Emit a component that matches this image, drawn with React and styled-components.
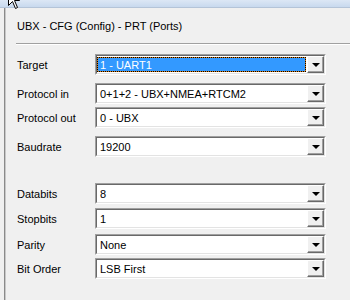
import React from 'react';
import styled, { createGlobalStyle } from 'styled-components';

const GlobalStyle = createGlobalStyle`
	html, body {
		margin: 0;
		padding: 0;
		background: #f0f0f0;
	}
	body {
		font-family: "Liberation Sans", Arial, sans-serif;
		font-size: 11px;
		color: #000;
		overflow: hidden;
	}
`;

const Screen = styled.div`
	position: relative;
	width: 350px;
	height: 300px;
	display: flex;
	flex-direction: column;
	background: #f0f0f0;
`;

const TopStrip = styled.div`
	height: 7px;
	flex-shrink: 0;
	background: linear-gradient(#dce7f5, #c8d9ee);
	border-bottom: 1px solid #b4c4d8;
`;

const Panel = styled.div`
	flex: 1;
	margin-left: 4px;
	border-left: 1px solid #8a8a8a;
	box-shadow: inset 1px 0 0 #c8c8c8;
	padding-left: 11px;
	display: flex;
	flex-direction: column;
`;

const Title = styled.div`
	margin-top: 12px;
	line-height: 13px;
	height: 13px;
	padding-left: 1px;
`;

const Separator = styled.div`
	margin-top: 10px;
	height: 1px;
	background: #a0a0a0;
	border-bottom: 1px solid #ffffff;
`;

const Row = styled.div`
	display: flex;
	align-items: center;
	height: 21px;
	margin-top: ${props => props.gap}px;
`;

const Label = styled.div`
	width: 78px;
	flex-shrink: 0;
	padding-left: 1px;
`;

const ComboOuter = styled.div`
	width: 229px;
	height: 19px;
	border: 1px solid;
	border-color: #a0a0a0 #ffffff #ffffff #a0a0a0;
`;

const ComboInner = styled.div`
	height: 17px;
	border: 1px solid;
	border-color: #696969 #e3e3e3 #e3e3e3 #696969;
	background: #ffffff;
	display: flex;
	align-items: stretch;
`;

const Value = styled.div`
	flex: 1;
	display: flex;
	align-items: center;
	padding-left: 3px;
	white-space: nowrap;
	overflow: hidden;
`;

const SelectedValue = styled.div`
	flex: 1;
	margin: 1px 1px 1px 0;
	display: flex;
	align-items: center;
	padding-left: 2px;
	color: #ffffff;
	white-space: nowrap;
	border: 1px dotted #000;
	background: linear-gradient(#3399ff, #3399ff) padding-box, #d9801a border-box;
`;

const DropButton = styled.div`
	width: 15px;
	flex-shrink: 0;
	border: 1px solid;
	border-color: #ffffff #696969 #696969 #ffffff;
	box-shadow: inset -1px -1px 0 #a0a0a0;
	background: #f0f0f0;
	display: flex;
	align-items: center;
	justify-content: center;
`;

const Arrow = styled.div`
	width: 0;
	height: 0;
	margin-top: 1px;
	border-left: 4px solid transparent;
	border-right: 4px solid transparent;
	border-top: 4px solid #000;
`;

const Cursor = styled.svg`
	position: absolute;
	left: 8px;
	top: -11px;
`;

const rows = [
	{ label: 'Target', value: '1 - UART1', gap: 9, selected: true },
	{ label: 'Protocol in', value: '0+1+2 - UBX+NMEA+RTCM2', gap: 8 },
	{ label: 'Protocol out', value: '0 - UBX', gap: 3 },
	{ label: 'Baudrate', value: '19200', gap: 8 },
	{ label: 'Databits', value: '8', gap: 26 },
	{ label: 'Stopbits', value: '1', gap: 4 },
	{ label: 'Parity', value: 'None', gap: 5 },
	{ label: 'Bit Order', value: 'LSB First', gap: 3 }
];

const Combo = ({ value, selected }) => (
	<ComboOuter>
		<ComboInner>
			{selected ? (
				<SelectedValue>{value}</SelectedValue>
			) : (
				<Value>{value}</Value>
			)}
			<DropButton>
				<Arrow />
			</DropButton>
		</ComboInner>
	</ComboOuter>
);

export default function App() {
	return (
		<Screen>
			<GlobalStyle />
			<TopStrip />
			<Panel>
				<Title>UBX - CFG (Config) - PRT (Ports)</Title>
				<Separator />
				{rows.map(row => (
					<Row key={row.label} gap={row.gap}>
						<Label>{row.label}</Label>
						<Combo value={row.value} selected={row.selected} />
					</Row>
				))}
			</Panel>
			<Cursor width="13" height="21" viewBox="0 0 13 21">
				<path
					d="M0.5 0.5 L0.5 16.5 L4.5 12.5 L7.5 19.5 L9.5 18.5 L6.5 11.5 L11.5 11.5 Z"
					fill="#fff"
					stroke="#000"
					strokeWidth="1"
				/>
			</Cursor>
		</Screen>
	);
}
